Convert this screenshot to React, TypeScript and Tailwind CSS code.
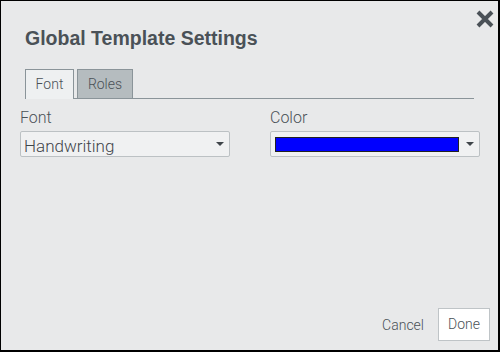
import React from "react";

function Caret() {
  return (
    <svg width="8" height="4" viewBox="0 0 8 4" className="shrink-0">
      <path d="M0 0 H8 L4 4 Z" fill="#3f454a" />
    </svg>
  );
}

const light = { fontFamily: 'Roboto, "Liberation Sans", sans-serif', fontWeight: 300 } as const;

export default function App() {
  return (
    <div
      className="w-[500px] h-[352px] bg-[#e8e9ea] border-black border-t border-l border-r-2 border-b-2 relative flex flex-col"
      style={{ fontFamily: '"Liberation Sans", Arial, sans-serif' }}
    >
      <button className="absolute left-[473px] top-[7px] w-[22px] h-[22px] flex items-center justify-center">
        <svg width="20" height="20" viewBox="0 0 20 20">
          <path d="M3 3 L17 17 M17 3 L3 17" stroke="#4a5157" strokeWidth="4" strokeLinecap="butt" />
        </svg>
      </button>
      <h1 className="ml-[24px] mt-[25px] text-[19.5px] leading-[24px] font-bold text-[#4a5157]">
        Global Template Settings
      </h1>
      <div className="ml-[24px] mr-[24px] mt-[19px] flex items-end border-b border-[#8a9499] h-[30px]">
        <div
          className="h-[30px] w-[49px] bg-[#eef0f1] border border-b-0 border-[#8a9499] flex items-center justify-center text-[14px] text-[#4a5157] -mb-px relative"
          style={light}
        >
          Font
        </div>
        <div
          className="ml-[3px] h-[29px] w-[56px] bg-[#b5bcbf] border border-b-0 border-[#8a9499] flex items-center justify-center text-[14px] text-[#4a5157]"
          style={light}
        >
          Roles
        </div>
      </div>
      <div className="flex gap-[40px] ml-[19px] mt-[10px]" style={light}>
        <div className="w-[210px]">
          <div className="text-[16px] leading-[18px] text-[#4a5157]">Font</div>
          <div className="mt-[4px] h-[26px] bg-[#f0f1f2] border border-[#bcc1c4] rounded-[2px] flex items-center pl-[3px] pr-[5px] justify-between">
            <span className="text-[17px] leading-[20px] pt-[4px] text-[#3f454a]">Handwriting</span>
            <Caret />
          </div>
        </div>
        <div className="w-[210px]">
          <div className="text-[16px] leading-[18px] text-[#4a5157]">Color</div>
          <div className="mt-[4px] h-[26px] bg-[#f0f1f2] border border-[#bcc1c4] rounded-[2px] flex items-center pl-[4px] pr-[5px] justify-between">
            <div className="w-[184px] h-[15px] bg-[#0000ff] border border-[#222]" />
            <Caret />
          </div>
        </div>
      </div>
      <div className="mt-auto mb-[9px] mr-[8px] flex items-center justify-end" style={light}>
        <span className="text-[14px] text-[#4a5157] mr-[14px] pt-[2px]">Cancel</span>
        <button className="w-[52px] h-[33px] bg-white border border-[#bfc4c7] text-[14px] text-[#4a5157]">
          Done
        </button>
      </div>
    </div>
  );
}
